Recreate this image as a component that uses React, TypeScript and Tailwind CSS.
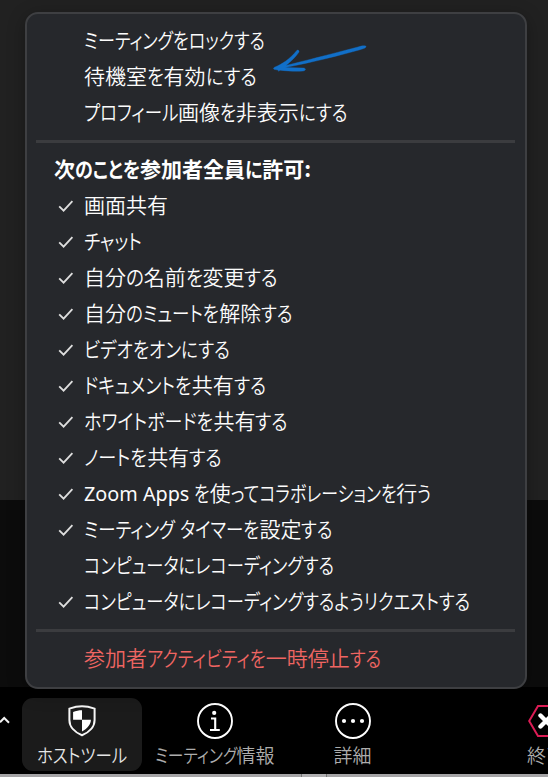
import { useLayoutEffect, useRef } from "react";

const FONT = "font-['Noto_Sans_CJK_JP','Noto_Sans',sans-serif]";

// Splits a label into kana, latin and ideograph runs.
const RUNS = /[\u3040-\u30ff]+|[A-Za-z :]+|[^\u3040-\u30ffA-Za-z :]+/g;

// A one-line label of a given width whose kana are condensed while kanji keep full width.
function Label({ text, width }: { text: string; width: number }) {
  const ref = useRef<HTMLSpanElement>(null);
  useLayoutEffect(() => {
    const root = ref.current;
    if (!root) return;
    const outers = Array.from(root.querySelectorAll<HTMLElement>("[data-kana]"));
    outers.forEach((o) => {
      o.style.width = "auto";
    });
    let other = 0;
    root.querySelectorAll<HTMLElement>("[data-fixed]").forEach((e) => {
      other += e.getBoundingClientRect().width;
    });
    const widths = outers.map((o) => (o.firstElementChild as HTMLElement).offsetWidth);
    const kana = widths.reduce((a, b) => a + b, 0);
    if (!kana) return;
    const k = (width - other) / kana;
    outers.forEach((o, i) => {
      o.style.width = `${widths[i] * k}px`;
      (o.firstElementChild as HTMLElement).style.transform = `scaleX(${k})`;
    });
  }, [text, width]);
  return (
    <span ref={ref} className="flex items-baseline whitespace-pre">
      {(text.match(RUNS) ?? []).map((run, i) =>
        /[\u3040-\u30ff]/.test(run) ? (
          <span key={i} data-kana className="block shrink-0">
            <span className="inline-block origin-left [font-feature-settings:'palt']">{run}</span>
          </span>
        ) : (
          <span
            key={i}
            data-fixed
            className={/[A-Za-z]/.test(run) ? "block shrink-0 font-['Noto_Sans',sans-serif] text-[19.8px] leading-none font-normal" : "block shrink-0"}
          >
            {run}
          </span>
        )
      )}
    </span>
  );
}

type Item = { text: string; width: number; checked?: boolean };

const TOP: Item[] = [
  { text: "ミーティングをロックする", width: 181 },
  { text: "待機室を有効にする", width: 172 },
  { text: "プロフィール画像を非表示にする", width: 263 },
];

const ALLOW: Item[] = [
  { text: "画面共有", width: 84, checked: true },
  { text: "チャット", width: 58, checked: true },
  { text: "自分の名前を変更する", width: 194, checked: true },
  { text: "自分のミュートを解除する", width: 209, checked: true },
  { text: "ビデオをオンにする", width: 146, checked: true },
  { text: "ドキュメントを共有する", width: 182, checked: true },
  { text: "ホワイトボードを共有する", width: 204, checked: true },
  { text: "ノートを共有する", width: 138, checked: true },
  { text: "Zoom Apps を使ってコラボレーションを行う", width: 347, checked: true },
  { text: "ミーティング タイマーを設定する", width: 249, checked: true },
  { text: "コンピュータにレコーディングする", width: 250 },
  { text: "コンピュータにレコーディングするようリクエストする", width: 386, checked: true },
];

function Check() {
  return (
    <svg className="size-4" viewBox="0 0 16 16" fill="none" stroke="#dedede" strokeWidth="1.8">
      <path d="M1.2 8.3 5.6 12.7 14.4 3.1" />
    </svg>
  );
}

function Row({ item }: { item: Item }) {
  return (
    <div className="flex h-9 items-center pl-[31px]">
      <span className="w-[26px] shrink-0">{item.checked && <Check />}</span>
      <div className="pb-[5px]"><Label text={item.text} width={item.width} /></div>
    </div>
  );
}

function Divider() {
  return <div className="mr-[10px] ml-[9px] h-[3px] shrink-0 bg-[#3b3c3f]" />;
}

function Arrow() {
  return (
    <svg className="absolute left-[245px] top-[29px] h-[34px] w-[100px]" viewBox="272 43 100 34" fill="#116fc8" stroke="#116fc8" strokeWidth="0.4">
      <path d="M366 46.2C364 45.5 361 46 358 47C341 51.5 315 58.2 286 65.5C291 61.5 296 56.5 299 52C299.5 50.5 297.8 49.5 296.8 50.5C290 59 282 64.2 274.5 67.3C273 68.1 273.2 69.3 275 69.5L278 70L278.6 71.3L280 70.2C287 71 296 71.5 303 71C306.5 70.6 306 68 303 68L285 67.5C312 62.5 341 55 360 49.7C363.5 48.7 366.5 47.7 366 46.2Z" />
    </svg>
  );
}

function ShieldIcon() {
  return (
    <svg className="h-[32px] w-[28px]" viewBox="0 0 28 32">
      <path d="M14 1.2C17.8 1.2 22 2 26.6 3.6V15C26.6 22 21 27.5 14 30.2C7 27.5 1.4 22 1.4 15V3.6C6 2 10.2 1.2 14 1.2Z" fill="none" stroke="#f7f7f7" strokeWidth="2" />
      <path d="M14 5.3V14.8H5.1V6.9C8 5.8 11 5.3 14 5.3ZM14 14.8H22.9C22.9 19.3 19.8 23.4 14 26.4Z" fill="#fff" />
    </svg>
  );
}

function InfoIcon() {
  return (
    <svg className="size-9" viewBox="0 0 36 36" fill="none" stroke="#fff">
      <circle cx="18" cy="18" r="17" strokeWidth="1.9" />
      <circle cx="17.2" cy="9.9" r="2.1" fill="#fff" stroke="none" />
      <path d="M14 15.5H18.2V27M13 27H22.8" strokeWidth="2.1" />
    </svg>
  );
}

function MoreIcon() {
  return (
    <svg className="size-9" viewBox="0 0 36 36" fill="#fff">
      <circle cx="18" cy="18" r="17" fill="none" stroke="#fff" strokeWidth="1.9" />
      <circle cx="9" cy="18" r="2.1" />
      <circle cx="18" cy="18" r="2.1" />
      <circle cx="27" cy="18" r="2.1" />
    </svg>
  );
}

function EndIcon() {
  return (
    <svg className="h-9 w-[38px]" viewBox="0 0 38 36" fill="none">
      <path d="M11 3H29L38 18 29 33H11L2.2 18Z" stroke="#dc1c55" strokeWidth="2" />
      <path d="M13.5 12.5 24.5 23.5M24.5 12.5 13.5 23.5" stroke="#fff" strokeWidth="4.4" strokeLinecap="round" />
    </svg>
  );
}

export default function App() {
  return (
    <div className={`relative flex h-[777px] w-[548px] flex-col overflow-hidden bg-black ${FONT}`}>
      <div className="h-[500px] shrink-0 bg-[#212121]" />
      <div className="h-[187px] shrink-0 bg-[#0c0c0c]" />
      <div className="relative flex h-[87px] shrink-0 text-[19px] leading-[28px] font-[350] text-[#adadad]">
        <div className="w-[22px] shrink-0 pt-[29px]">
          <svg className="h-[8px] w-[10px]" viewBox="0 0 10 8" fill="none" stroke="#f2f2f2" strokeWidth="2">
            <path d="M0 6.2 4.2 2 9 6.7" />
          </svg>
        </div>
        <div className="mt-[11px] flex h-[73px] w-[120px] shrink-0 flex-col items-center rounded-[11px] bg-[#1b1b1b] pt-[7px] text-[#e6e6e6]">
          <ShieldIcon />
          <div className="mt-[4px]"><Label text="ホストツール" width={90} /></div>
        </div>
        <div className="flex w-[145px] shrink-0 flex-col items-center pt-[16px]">
          <InfoIcon />
          <div className="mt-[2px]"><Label text="ミーティング情報" width={120} /></div>
        </div>
        <div className="flex w-[131px] shrink-0 flex-col items-center pt-[16px]">
          <MoreIcon />
          <div className="mt-[2px]"><Label text="詳細" width={38} /></div>
        </div>
        <div className="ml-[109px] flex w-[40px] shrink-0 flex-col pt-[16px]">
          <EndIcon />
          <div className="mt-[2px]"><Label text="終了" width={38} /></div>
        </div>
      </div>
      <div className="flex h-[3px] shrink-0 bg-[#a5a4a6]">
        <div className="ml-[301px] h-full w-[26px] border-x border-[#777] bg-[#b0afb1]" />
      </div>

      <div className="absolute left-[25px] top-[12px] flex h-[677px] w-[502px] flex-col rounded-[13px] border-2 border-[#3e3f42] bg-[#26282c] text-[21px] leading-9 font-[350] text-[#fcfcfc] shadow-[0_4px_18px_rgba(0,0,0,0.3)]">
        <div className="pt-[9px] pb-[9px]">
          {TOP.map((item) => <Row key={item.text} item={item} />)}
        </div>
        <Divider />
        <div className="pt-[9px] pb-[9px]">
          <div className="flex h-9 items-center pb-[5px] pl-[27px] font-bold text-white">
            <Label text="次のことを参加者全員に許可:" width={257} />
          </div>
          {ALLOW.map((item) => <Row key={item.text} item={item} />)}
        </div>
        <Divider />
        <div className="flex h-[54px] items-center pb-[5px] pl-[57px] text-[#ef6562]">
          <Label text="参加者アクティビティを一時停止する" width={297} />
        </div>
        <Arrow />
      </div>
    </div>
  );
}
